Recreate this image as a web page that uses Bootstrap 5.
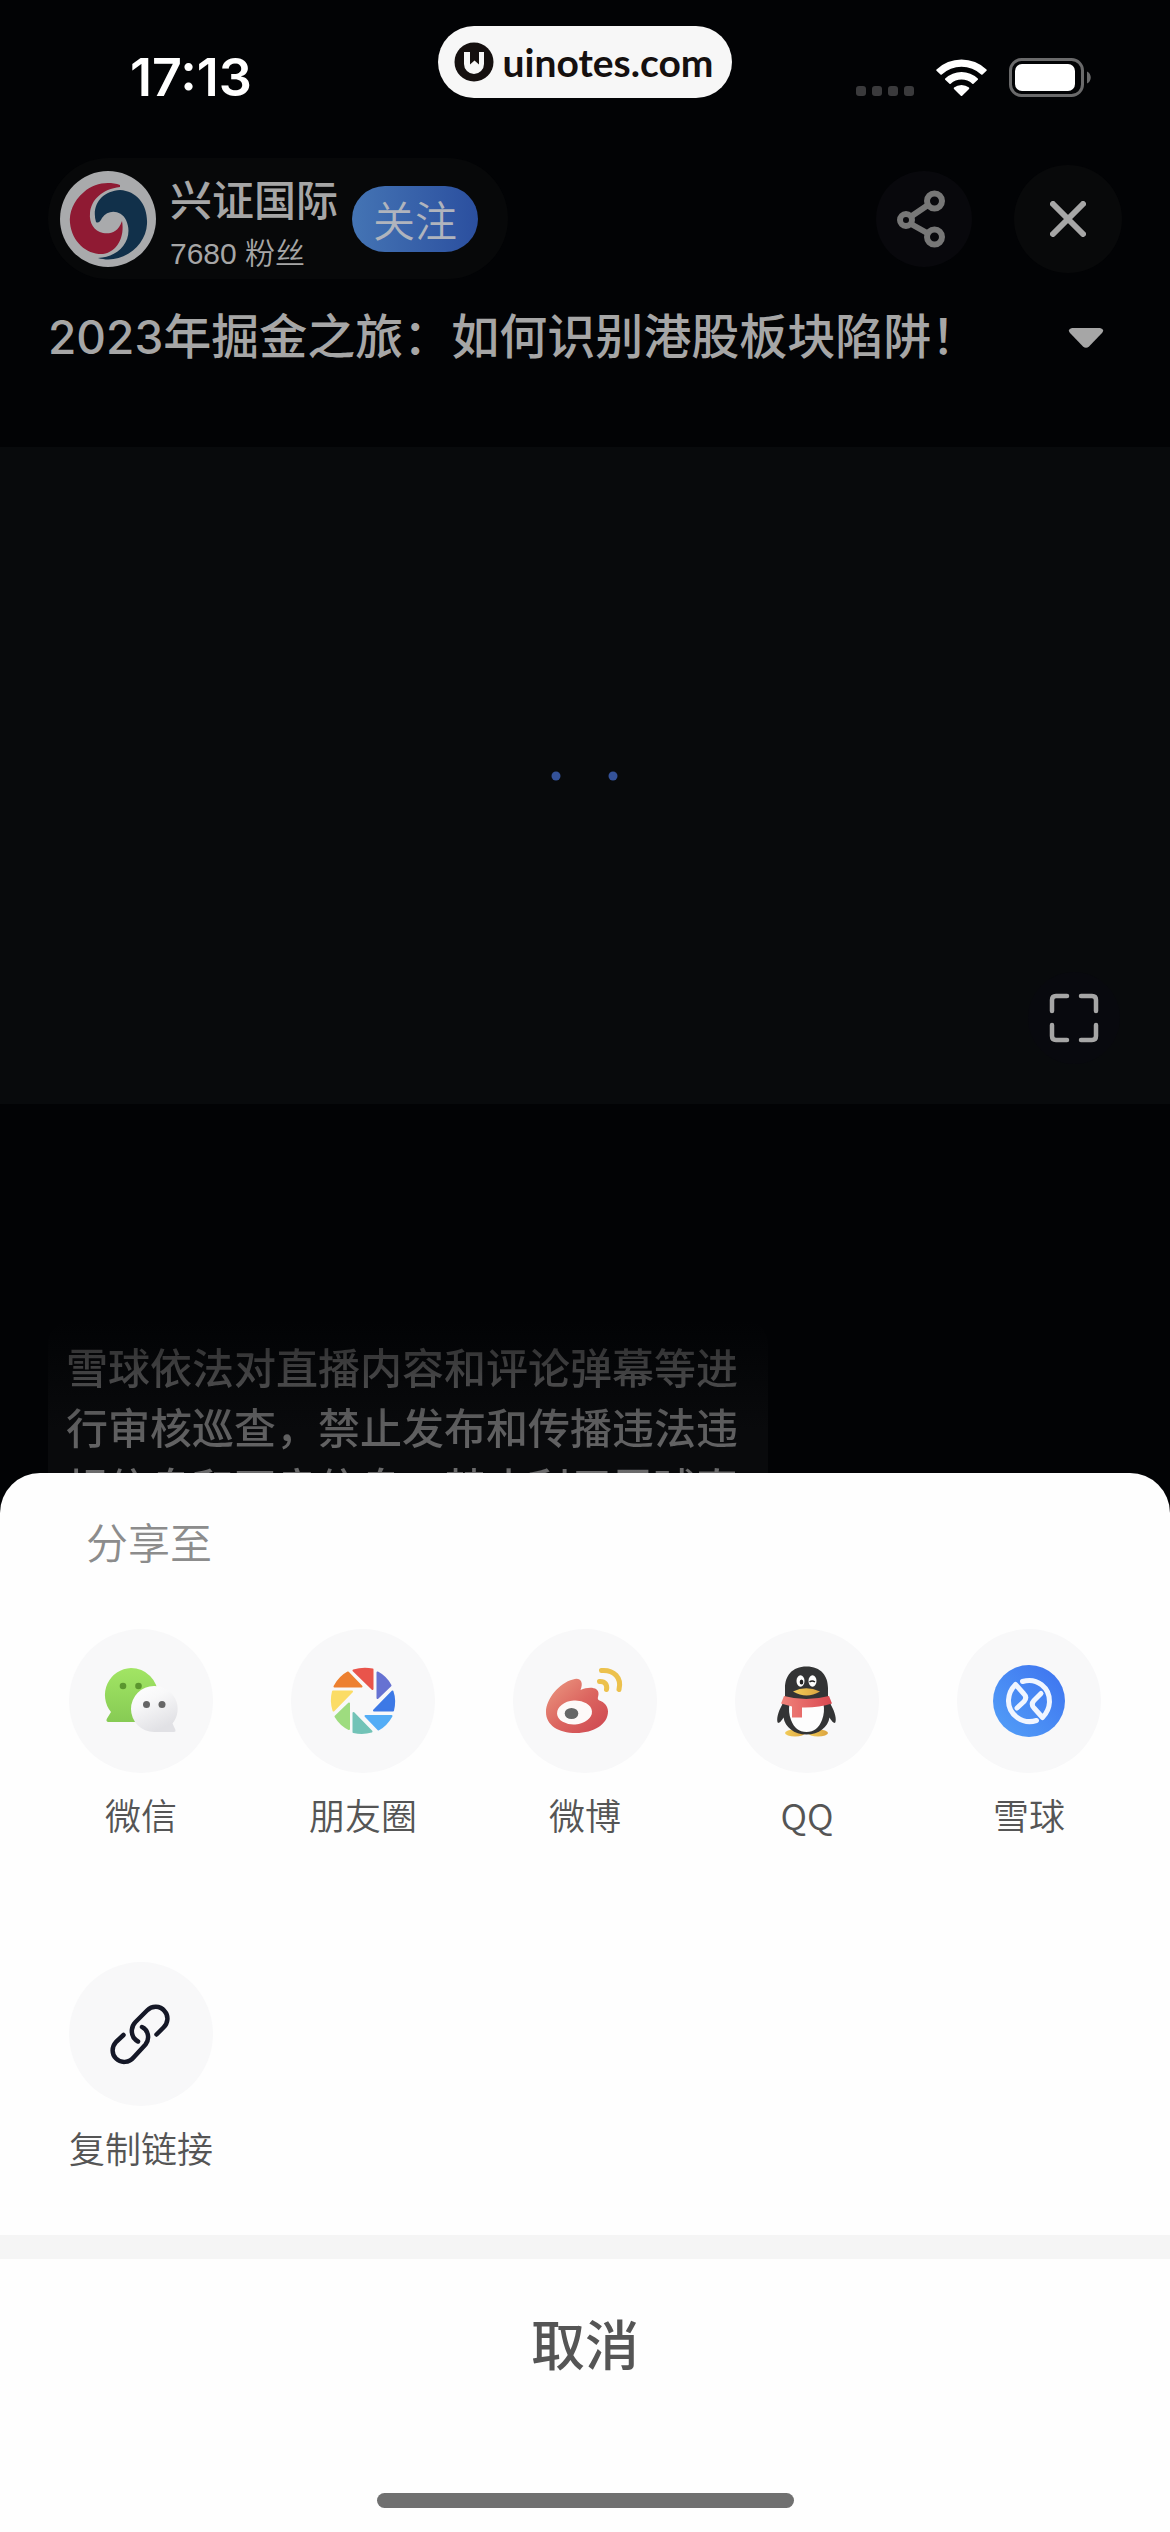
<!DOCTYPE html>
<html lang="zh-CN">
<head>
<meta charset="utf-8">
<meta name="viewport" content="width=device-width, initial-scale=1">
<title>分享至</title>
<link href="https://cdn.jsdelivr.net/npm/bootstrap@5.3.0/dist/css/bootstrap.min.css" rel="stylesheet">
<style>
  body { background: #020305; font-family: "Noto Sans CJK SC", sans-serif; color: #a6a6a6; }
  .screen { min-height: 100vh; }
  svg { display: block; }
  button { color: inherit; }

  /* status bar */
  .status { height: 158px; grid-template-columns: 1fr auto 1fr; }
  .clock { font: 600 52px/1 Inter, sans-serif; color: #fff; padding: 52px 0 0 130px; }
  .site-tag { height: 72px; margin-top: 26px; padding: 0 18px 0 16px; border-radius: 36px; background: #f7f7f7; color: #15100f; font: 700 39px/1 Lato, sans-serif; }
  .indicators { padding: 58px 78px 0 0; }

  /* host bar */
  .host-bar { padding: 0 48px; height: 121px; }
  .host { height: 121px; border-radius: 61px; background: #070809; padding: 0 30px 0 12px; gap: 14px; }
  .host-name { font-size: 42px; line-height: 48px; font-weight: 500; padding-top: 8px; }
  .host-fans { font-family: "Liberation Sans", "Noto Sans CJK SC", sans-serif; font-size: 30px; line-height: 36px; padding-top: 14px; font-weight: 350; }
  .host-tools { gap: 42px; }
  .follow { width: 126px; height: 66px; border-radius: 33px; font-size: 42px; line-height: 64px; font-weight: 350; background: linear-gradient(90deg, #4474b4, #2b4f9f); color: #b0b4bd; }
  .round-share { width: 96px; height: 96px; background: #08080c; }
  .round-close { width: 108px; height: 108px; background: #08090a; }

  .topic { padding: 0 66px 0 48px; height: 168px; }
  .topic h1 { font-size: 48px; line-height: 72px; font-weight: 500; padding-top: 18px; }
  .topic-year { font-family: Inter, sans-serif; font-size: 46px; }
  .caret { padding-top: 48px; }

  .player { height: 657px; background: #080a0c; }
  .player-full { right: 50px; bottom: 40px; width: 92px; height: 92px; background: #08090e; }

  .notice { width: 720px; max-width: 100%; margin: 216px 0 0 48px; padding: 16px 24px 14px 18px; border-radius: 24px 24px 0 0; background: linear-gradient(#020305, #090a0c 110px); }
  .notice p { font-size: 42px; line-height: 60px; font-weight: 500; color: transparent; background: linear-gradient(#2c2c2d, #5a5a5b 80px, #6e6e6f 150px); -webkit-background-clip: text; background-clip: text; }

  /* share sheet */
  .sheet { border-radius: 40px 40px 0 0; margin-top: -57px; background: #fefefe; color: #555; }
  .sheet-title { font-size: 42px; line-height: 60px; font-weight: 350; padding: 38px 86px 0; margin-bottom: 58px; color: #8c8c8c; }
  .targets { padding: 0 30px; row-gap: 94px; }
  .target { font-size: 36px; line-height: 48px; font-weight: 350; }
  .disc { width: 144px; height: 144px; margin: 0 auto 17px; background: #f8f8f9; }
  .target span { display: block; margin-bottom: 30px; }
  .band { height: 24px; background: #f5f5f5; margin-top: 34px; }
  .cancel { font-size: 54px; line-height: 72px; font-weight: 500; padding: 48px 0 66px; color: #555; }
  .home-line { width: 417px; height: 15px; border-radius: 8px; background: #707070; margin: 48px auto 24px; }
</style>
</head>
<body>
<main class="screen d-flex flex-column">

  <header class="status d-grid align-items-start">
    <div class="clock">17:13</div>
    <div class="site-tag d-flex align-items-center">
      <svg width="40" height="40" viewBox="0 0 40 40" class="me-2"><circle cx="20" cy="20" r="19.500" fill="#15100f"/><path d="M10 10h6v12.500l4.500-4 4.500 4V10h5v12a10 10 0 0 1-20 0z" fill="#f7f7f7"/></svg>
      <span>uinotes.com</span>
    </div>
    <div class="indicators d-flex justify-content-end">
      <svg width="236" height="40" viewBox="0 0 236 40">
        <g fill="#3a3a3c"><rect x="0" y="28" width="10" height="10" rx="3"/><rect x="16" y="28" width="10" height="10" rx="3"/><rect x="32" y="28" width="10" height="10" rx="3"/><rect x="48" y="28" width="10" height="10" rx="3"/></g>
        <g fill="#fff"><path d="M80.500 11.500A36 36 0 0 1 130.500 11.500Q131 12.200 130.500 12.800L126.500 16.600Q125.800 17 125.200 16.500A29 29 0 0 0 85.800 16.500Q85.200 17 84.500 16.600L80.500 12.800Q80 12.200 80.500 11.500Z"/><path d="M89.200 20.500A24 24 0 0 1 121.800 20.500Q122.400 21.200 121.800 21.800L117.500 25.800Q116.900 26.200 116.300 25.700A16 16 0 0 0 94.700 25.700Q94.100 26.200 93.500 25.800L89.200 21.800Q88.600 21.200 89.200 20.500Z"/><path d="M98 29.600A12 12 0 0 1 113 29.600Q113.600 30.200 113 30.900L106.200 37.800Q105.500 38.400 104.800 37.800L98 30.900Q97.400 30.200 98 29.600Z"/></g>
        <rect x="154.500" y="1.500" width="72" height="36" rx="11" fill="none" stroke="#6a6a6b" stroke-width="3"/><rect x="159" y="6" width="60" height="27" rx="7" fill="#fff"/><path d="M231 13.500c5 2 5 10 0 12z" fill="#6a6a6b"/>
      </svg>
    </div>
  </header>

  <div class="host-bar d-flex justify-content-between align-items-center">
    <div class="host d-flex align-items-center">
      <svg width="96" height="96" viewBox="0 0 96 96"><circle cx="48" cy="48" r="48" fill="#a9aaac"/>
        <path d="M60 14C48 10 34 12 24 21C13 30 9 42 10 52C12 72 28 84 43 83C57 81 65 66 62 50C58 62 50 63 43 62C34 60 29 52 30 42C31 29 42 18 60 16Z" fill="#8f1a33"/>
        <path d="M36 51C31 34 42 20 60 19C77 20 88 34 87 53C86 75 62 94 38 87C62 86 74 66 66 49C61 39 48 38 42 47Q39 53 36 51Z" fill="#11304a"/></svg>
      <div>
        <div class="host-name">兴证国际</div>
        <div class="host-fans">7680 粉丝</div>
      </div>
      <button type="button" class="follow border-0 p-0">关注</button>
    </div>
    <div class="host-tools d-flex align-items-center">
      <button type="button" aria-label="分享" class="round-share rounded-circle border-0 p-0 d-flex align-items-center justify-content-center">
        <svg width="56" height="60" viewBox="0 0 56 60" fill="none" stroke="#777" stroke-width="6"><circle cx="38.500" cy="12" r="7.500"/><circle cx="10" cy="31" r="6"/><circle cx="38.500" cy="48" r="7.500"/><path d="M15 27.500L32 16M15 35L32 44.500"/></svg>
      </button>
      <button type="button" aria-label="关闭" class="round-close rounded-circle border-0 p-0 d-flex align-items-center justify-content-center">
        <svg width="36" height="36" viewBox="0 0 36 36" stroke="#a6a6a6" stroke-width="6" stroke-linecap="round"><path d="M3 3L33 33M33 3L3 33"/></svg>
      </button>
    </div>
  </div>

  <section class="topic d-flex justify-content-between align-items-start">
    <h1 class="m-0"><span class="topic-year">2023</span>年掘金之旅：如何识别港股板块陷阱！</h1>
    <svg class="caret" width="36" height="70" viewBox="0 0 36 22"><path d="M4 1H32Q37 2 34 6L21 19.500Q18 22 15 19.500L2 6Q-1 2 4 1Z" fill="#a6a6a6"/></svg>
  </section>

  <section class="player position-relative d-flex align-items-center justify-content-center">
    <svg width="68" height="10" viewBox="0 0 68 10" fill="#345299"><circle cx="5" cy="5" r="4.500"/><circle cx="62" cy="5" r="4.500"/></svg>
    <button type="button" aria-label="全屏" class="player-full position-absolute rounded-circle border-0 p-0 d-flex align-items-center justify-content-center">
      <svg width="50" height="50" viewBox="0 0 50 50" fill="none" stroke="#a6a6a6" stroke-width="4.500" stroke-linecap="round"><path d="M3 18V7Q3 3 7 3H18M32 3H43Q47 3 47 7V18M47 32V43Q47 47 43 47H32M18 47H7Q3 47 3 43V32"/></svg>
    </button>
  </section>

  <div class="notice"><p class="m-0">雪球依法对直播内容和评论弹幕等进行审核巡查，禁止发布和传播违法违规信息和不良信息，禁止利用雪球直</p></div>

  <section class="sheet position-relative flex-grow-1">
    <h2 class="sheet-title">分享至</h2>
    <div class="targets row row-cols-5 g-0 text-center">
      <a href="#" class="target col text-decoration-none text-reset">
        <div class="disc rounded-circle d-flex"><svg width="144" height="144" viewBox="0 0 144 144"><defs><linearGradient id="g1" x2="0" y2="1"><stop stop-color="#a2e564"/><stop offset="1" stop-color="#87cb54"/></linearGradient><linearGradient id="g2" x2=".5" y2="1"><stop stop-color="#fff"/><stop offset=".4" stop-color="#f8f8f9"/><stop offset="1" stop-color="#e1e1e5"/></linearGradient></defs>
          <path d="M62 39A27 27 0 0 1 89 66V93H39Q36.500 92 38 89.500L42 83A27 27 0 0 1 62 39Z" fill="url(#g1)"/><circle cx="54" cy="57" r="3.300" fill="#5b962f"/><circle cx="69.500" cy="57" r="3.300" fill="#5b962f"/>
          <path d="M85 57A23 23 0 0 1 103.500 94.500L106.500 101Q107 103 105 103H85A23 23 0 0 1 85 57Z" fill="url(#g2)"/><circle cx="77.500" cy="75.500" r="3.500" fill="#666"/><circle cx="93" cy="75.500" r="3.500" fill="#666"/></svg></div>
        <span>微信</span>
      </a>
      <a href="#" class="target col text-decoration-none text-reset">
        <div class="disc rounded-circle d-flex"><svg width="144" height="144" viewBox="0 0 144 144" stroke-width="2" stroke-linejoin="round">
          <path d="M62.500 41.500Q72 38.500 81.500 40.500V60Z" fill="#e9544b" stroke="#e9544b"/>
          <path d="M86.500 43.500Q95 48 99.500 56.500L86.500 69Z" fill="#6672d2" stroke="#6672d2"/>
          <path d="M101.500 62.500Q104.500 71 102 81.500H83Z" fill="#3d79e6" stroke="#3d79e6"/>
          <path d="M100.500 87Q95.500 96 87.500 100.500L74.500 87Z" fill="#54adf6" stroke="#54adf6"/>
          <path d="M80.500 102.500Q72 105 62.500 103V84Z" fill="#72c3b7" stroke="#72c3b7"/>
          <path d="M58 100Q49.500 96 44.500 87.500L58 74.500Z" fill="#9edc7f" stroke="#9edc7f"/>
          <path d="M42.500 81.500Q39.500 72 42 62.500H61Z" fill="#fbdc66" stroke="#fbdc66"/>
          <path d="M43.500 57.500Q48.500 48 57 43.500L70.500 57.500Z" fill="#ed8030" stroke="#ed8030"/></svg></div>
        <span>朋友圈</span>
      </a>
      <a href="#" class="target col text-decoration-none text-reset">
        <div class="disc rounded-circle d-flex"><svg width="144" height="144" viewBox="0 0 144 144"><defs><linearGradient id="g3" x2="1" y2="1"><stop stop-color="#ec9b83"/><stop offset=".5" stop-color="#dc6660"/><stop offset="1" stop-color="#cd4550"/></linearGradient></defs>
          <path d="M60 50.500C67 48 71 53 67.500 61C76 57 86 58 85.500 65C85.500 68 83.500 70 86.500 71.500C91 73 95 77 95 82.500C95 95 81 104 63 104C45 104 33 96 33 83C33 70 46 54 60 50.500Z" fill="url(#g3)"/><ellipse cx="61.500" cy="83.500" rx="17.500" ry="12" fill="#fdf9f8" transform="rotate(-4 61.500 83.500)"/><ellipse cx="58.500" cy="84.500" rx="6.800" ry="5.500" fill="#666"/>
          <g fill="none" stroke="#ecc14d" stroke-width="5" stroke-linecap="round"><path d="M88.500 41.500C101 40.500 109 49 106 60.500"/><path d="M86.500 52.500C92 52 94.500 56 93.500 60.500"/></g></svg></div>
        <span>微博</span>
      </a>
      <a href="#" class="target col text-decoration-none text-reset">
        <div class="disc rounded-circle d-flex"><svg width="144" height="144" viewBox="0 0 144 144"><defs><linearGradient id="g4" x2="1"><stop stop-color="#f0837a"/><stop offset="1" stop-color="#d94850"/></linearGradient><linearGradient id="g5" x2="1"><stop stop-color="#f2cc59"/><stop offset="1" stop-color="#dba33f"/></linearGradient></defs>
          <ellipse cx="60" cy="104" rx="10" ry="3.500" fill="url(#g5)"/><ellipse cx="83" cy="104" rx="10" ry="3.500" fill="url(#g5)"/>
          <path d="M71.500 37.500C86 37.500 93 47 93 59V67L96 76C100 83 102 91 100 94C98 94 96 91 94.500 88.500C93 98 84 105.500 71.500 105.500S50 98 48.500 88.500C47 91 45 94 43 94C41 91 43 83 47 76L50 67V59C50 47 57 37.500 71.500 37.500Z" fill="#333435"/>
          <path d="M54.500 75Q53 83 56 91C59 99 64 103 71.500 103S84 99 87 91Q90 83 88.500 75Q71 79 54.500 75Z" fill="#fdfdfd"/>
          <path d="M49 67Q71 73 94 67L97 74.500Q83 79 67 78.500V88.500H57V77.500L46 74.500Z" fill="url(#g4)"/>
          <ellipse cx="65.500" cy="52" rx="4" ry="5.700" fill="#fff"/><ellipse cx="77.500" cy="52" rx="4" ry="5.700" fill="#fff"/><ellipse cx="66.500" cy="53" rx="1.800" ry="2.600" fill="#222"/><path d="M74.500 53Q77 51 80 53" fill="none" stroke="#222" stroke-width="1.500"/>
          <path d="M58 62.500Q71 56 85 62.500Q78 66.500 71.500 66.500T58 62.500Z" fill="url(#g5)"/></svg></div>
        <span>QQ</span>
      </a>
      <a href="#" class="target col text-decoration-none text-reset">
        <div class="disc rounded-circle d-flex"><svg width="144" height="144" viewBox="0 0 144 144"><defs><linearGradient id="g6" y1="1" x2="1" y2="0"><stop stop-color="#53a0f8"/><stop offset="1" stop-color="#3d72ef"/></linearGradient></defs>
          <circle cx="72" cy="72" r="36" fill="url(#g6)"/><g fill="none" stroke="#f0f5ff" stroke-width="5" stroke-linecap="round" stroke-linejoin="round"><path d="M65.500 52.500C80 48 93 59 92.500 73Q92 82 85.500 88.500L77 79Q73.500 75.500 77 71.500L84 64.500"/><path d="M79.500 91.500C65 96 51 85 51.500 71Q52 62 58.500 55.500L67 65Q70.500 68.500 67 72.500L60 79"/></g></svg></div>
        <span>雪球</span>
      </a>
      <a href="#" class="target col text-decoration-none text-reset">
        <div class="disc rounded-circle d-flex"><svg width="144" height="144" viewBox="0 0 144 144" fill="none" stroke="#151827" stroke-width="4.500" stroke-linecap="round" stroke-linejoin="round"><path d="M87.500 72.500L94.500 65.500C99 61 100 54 95.500 49C91 43.500 83 43.500 78 48.500L66.500 60C62 64.500 62 71 64.500 75.500Q66.500 78 69 79.500"/><path d="M73 65C79.500 68 81 77 76.500 82.500L65 95C60 101 52 101.500 47 96.500C42.500 92 42.500 85 47 80L54.500 73"/></svg></div>
        <span>复制链接</span>
      </a>
    </div>
    <div class="band"></div>
    <button type="button" class="cancel w-100 border-0 bg-transparent">取消</button>
    <div class="home-line"></div>
  </section>
</main>
<script src="https://cdn.jsdelivr.net/npm/bootstrap@5.3.0/dist/js/bootstrap.bundle.min.js"></script>
</body>
</html>
